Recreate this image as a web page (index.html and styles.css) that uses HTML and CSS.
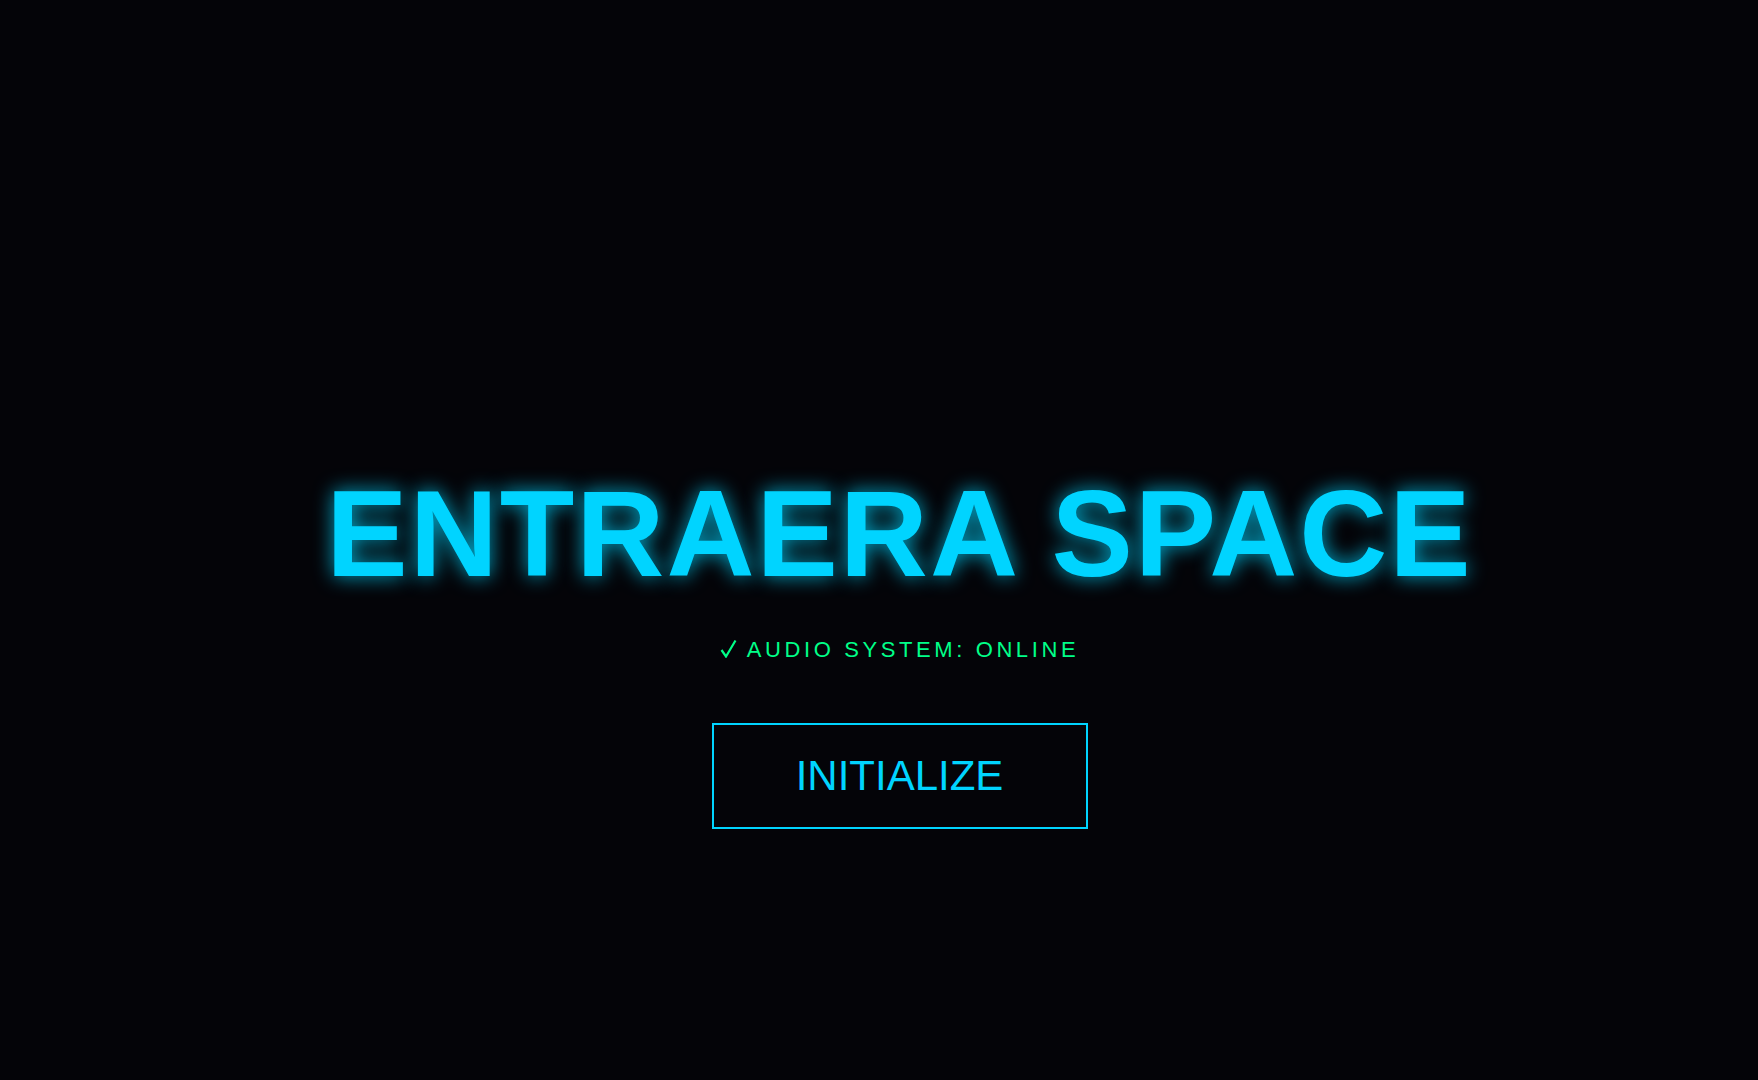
FILE: index.html
```html
<!DOCTYPE html>
<html lang="en">
<head>
  <meta charset="UTF-8" />
  <meta name="viewport" content="width=device-width, initial-scale=1.0"/>
  <title>Entraera Space</title>
  <link rel="stylesheet" href="styles.css">
</head>
<body>
  <div class="boot-screen">
    <h1 class="title">ENTRAERA SPACE</h1>
    <p class="audio-status">
      <svg class="check" width="17" height="19" viewBox="0 0 17 19"><path d="M1.5 11 L6 17.5 L15.5 1.5" fill="none" stroke="currentColor" stroke-width="2.2"/></svg>
      AUDIO SYSTEM: ONLINE
    </p>
    <button class="init-btn">INITIALIZE</button>
  </div>
</body>
</html>
```

FILE: styles.css
```css
body {
  margin: 0;
  background: #040408;
  font-family: 'Liberation Sans', Arial, sans-serif;
  overflow: hidden;
}

.boot-screen {
  height: 100vh;
  box-sizing: border-box;
  padding: 212px 0 0 41px;
  display: flex;
  flex-direction: column;
  align-items: center;
  justify-content: center;
}

.title {
  margin: 0 0 33px;
  font-size: 122px;
  font-weight: bold;
  letter-spacing: 2px;
  color: #00d4ff;
  text-shadow: 0 0 20px rgba(0, 212, 255, 0.8);
}

.audio-status {
  margin: 0 0 60px;
  display: flex;
  align-items: center;
  gap: 10px;
  font-size: 22px;
  letter-spacing: 3.6px;
  color: #00ff88;
}

.check {
  margin-top: -2px;
}

.init-btn {
  width: 376px;
  height: 106px;
  padding: 0;
  background: transparent;
  border: 2px solid #00d4ff;
  color: #00d4ff;
  font-family: 'Liberation Sans', Arial, sans-serif;
  font-size: 42px;
  cursor: pointer;
}
```
